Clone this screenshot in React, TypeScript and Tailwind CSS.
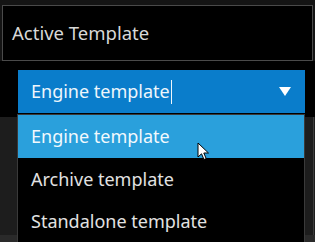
import React from 'react'

const font = { fontFamily: '"Noto Sans", "Open Sans", sans-serif' }

function Cursor() {
  return (
    <svg width="14" height="20" viewBox="0 0 14 20" className="absolute left-[197px] top-[142px]">
      <path d="M1 1 L1 15 L4.5 11.8 L7 17.5 L9.2 16.6 L6.8 11 L11.5 11 Z" fill="#fff" stroke="#000" strokeWidth="1" strokeLinejoin="round" />
    </svg>
  )
}

export default function App() {
  const items = ['Engine template', 'Archive template', 'Standalone template']

  return (
    <div className="relative w-[315px] h-[242px] overflow-hidden bg-[#141414]" style={font}>
      <div className="h-[5px] bg-[#141414]" />
      {/* header box */}
      <div className="mx-[2px] h-[56px] border border-[#4a4a4a] bg-black flex items-center pl-[9px]">
        <span className="text-[18.5px] text-[#d8d8d8]">Active Template</span>
      </div>
      {/* select row */}
      <div className="h-[56px] bg-black pt-[9px] pl-[18px] pr-[10px]">
        <div className="h-[43px] bg-[#0a7dcb] flex items-center justify-between pl-[13px] pr-[14px]">
          <span className="text-[18px] text-[#eef6fc] flex items-center">
            Engine template
            <span className="ml-[1px] inline-block w-px h-[24px] bg-[#eef6fc]" />
          </span>
          <svg width="12" height="9" viewBox="0 0 12 9">
            <path d="M0 0 H12 L6 9 Z" fill="#fff" />
          </svg>
        </div>
      </div>
      {/* panel behind */}
      <div className="h-[118px] bg-[#1d1d1d] flex">
        <div className="flex-1" />
        <div className="w-px bg-[#3c3c3c] mr-[1px]" />
      </div>
      <div className="h-[7px] bg-[#2a2a2a]" />

      {/* dropdown list */}
      <div className="absolute left-[17px] top-[114px] w-[288px] h-[140px] bg-black border border-[#3a3a3a]">
        {items.map((item, i) => (
          <div
            key={item}
            className={
              i === 0
                ? 'h-[43px] bg-[#2aa0dc] flex items-center pl-[13px] text-[18px] text-[#f2f9fd]'
                : 'h-[42px] flex items-center pl-[13px] text-[18px] text-[#e2e2e2]'
            }
          >
            {item}
          </div>
        ))}
      </div>
      <Cursor />
    </div>
  )
}
